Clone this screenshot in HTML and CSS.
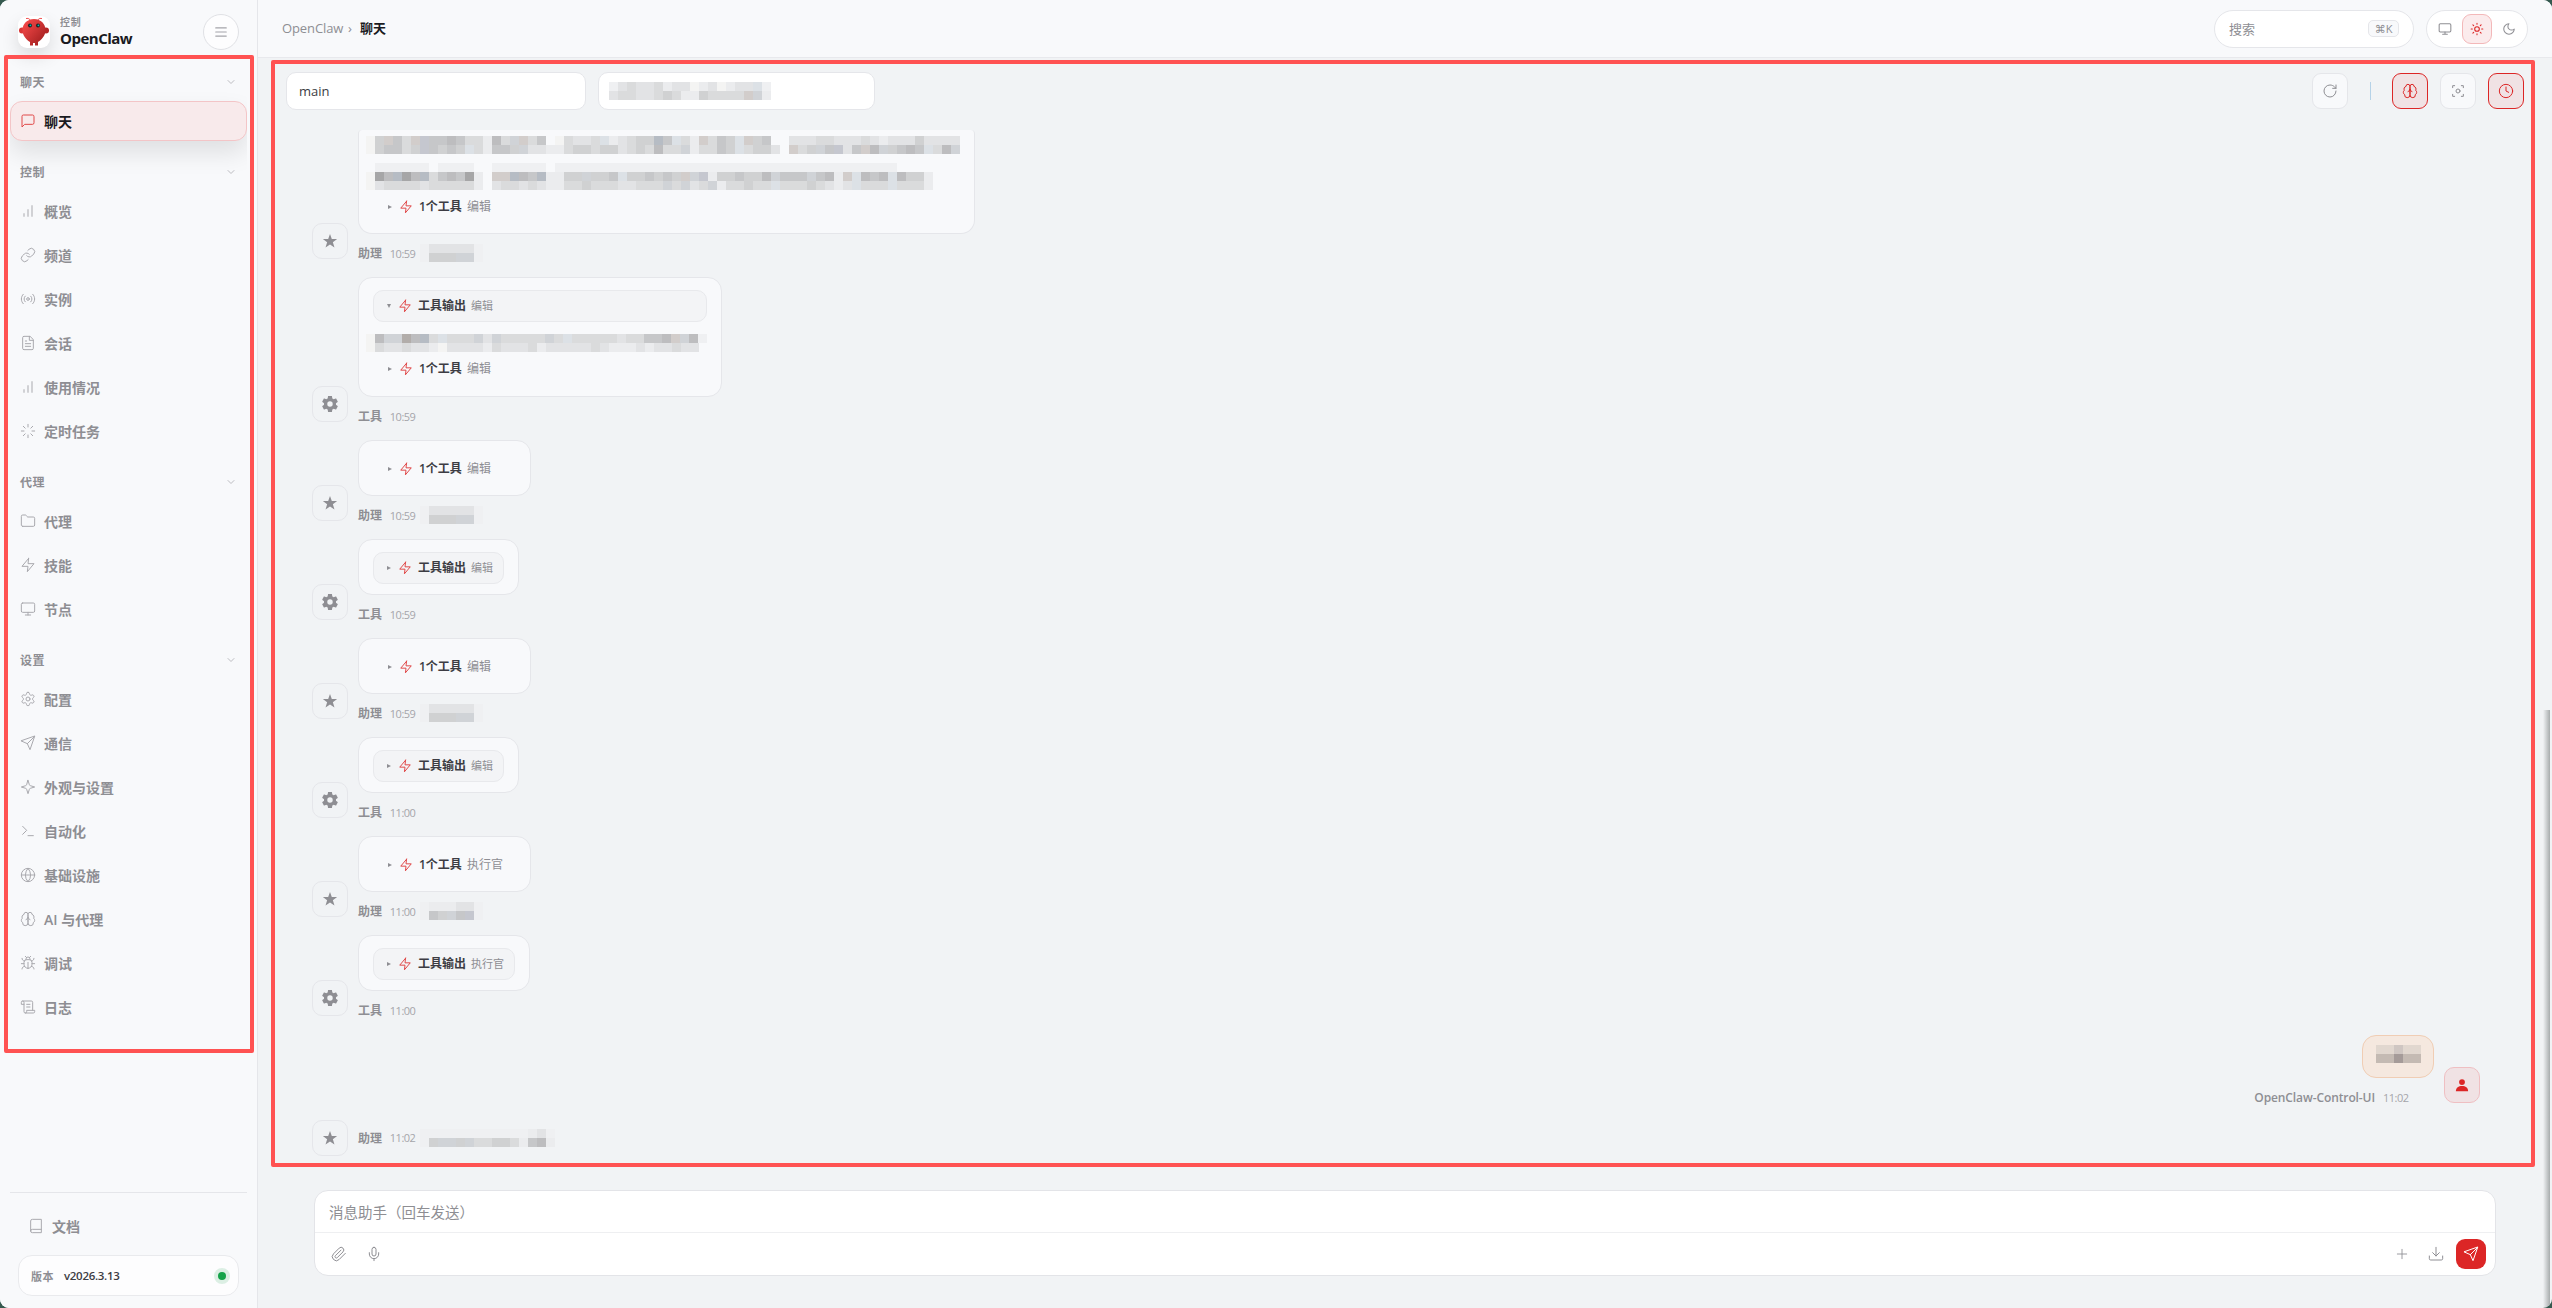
FILE: index.html
```html
<!DOCTYPE html>
<html lang="zh-CN">
<head>
  <meta charset="UTF-8">
  <meta name="viewport" content="width=device-width, initial-scale=1.0">
  <title>OpenClaw Control</title>
  <link rel="stylesheet" href="styles.css">
</head>
<body>
  <!-- Icons -->
  <svg class="sprite" xmlns="http://www.w3.org/2000/svg">
    <symbol id="i-chat" viewBox="0 0 24 24"><path d="M21 15a2 2 0 0 1-2 2H7l-4 4V5a2 2 0 0 1 2-2h14a2 2 0 0 1 2 2z"/></symbol>
    <symbol id="i-down" viewBox="0 0 24 24"><path d="m6 9 6 6 6-6"/></symbol>
    <symbol id="i-menu" viewBox="0 0 24 24"><path d="M3 5h18M3 12h18M3 19h18"/></symbol>
    <symbol id="i-bars" viewBox="0 0 24 24"><path d="M12 20V10M18 20V4M6 20v-4"/></symbol>
    <symbol id="i-link" viewBox="0 0 24 24"><path d="M10 13a5 5 0 0 0 7.54.54l3-3a5 5 0 0 0-7.07-7.07l-1.72 1.71"/><path d="M14 11a5 5 0 0 0-7.54-.54l-3 3a5 5 0 0 0 7.07 7.07l1.71-1.71"/></symbol>
    <symbol id="i-radio" viewBox="0 0 24 24"><path d="M4.9 19.1C1 15.2 1 8.8 4.9 4.9M7.8 16.2c-2.3-2.3-2.3-6.1 0-8.5M16.2 7.8c2.3 2.3 2.3 6.1 0 8.5M19.1 4.9C23 8.8 23 15.1 19.1 19"/><circle cx="12" cy="12" r="2"/></symbol>
    <symbol id="i-file" viewBox="0 0 24 24"><path d="M14.5 2H6a2 2 0 0 0-2 2v16a2 2 0 0 0 2 2h12a2 2 0 0 0 2-2V7.500z"/><path d="M14 2v6h6M16 13H8M16 17H8M10 9H8"/></symbol>
    <symbol id="i-loader" viewBox="0 0 24 24"><path d="M12 2v4M12 18v4M4.930 4.930l2.830 2.830M16.240 16.240l2.830 2.830M2 12h4M18 12h4M4.930 19.070l2.830-2.830M16.240 7.760l2.830-2.830"/></symbol>
    <symbol id="i-folder" viewBox="0 0 24 24"><path d="M4 20h16a2 2 0 0 0 2-2V8a2 2 0 0 0-2-2h-7.930a2 2 0 0 1-1.660-.9l-.82-1.200A2 2 0 0 0 7.930 3H4a2 2 0 0 0-2 2v13c0 1.100.9 2 2 2Z"/></symbol>
    <symbol id="i-zap" viewBox="0 0 24 24"><path d="M13 2 3 14h9l-1 8 10-12h-9l1-8z"/></symbol>
    <symbol id="i-monitor" viewBox="0 0 24 24"><rect x="2" y="3" width="20" height="14" rx="2"/><path d="M8 21h8M12 17v4"/></symbol>
    <symbol id="i-settings" viewBox="0 0 24 24"><path d="M12.220 2h-.44a2 2 0 0 0-2 2v.18a2 2 0 0 1-1 1.730l-.43.25a2 2 0 0 1-2 0l-.15-.08a2 2 0 0 0-2.730.73l-.22.38a2 2 0 0 0 .73 2.730l.15.1a2 2 0 0 1 1 1.720v.51a2 2 0 0 1-1 1.740l-.15.09a2 2 0 0 0-.73 2.730l.22.38a2 2 0 0 0 2.730.73l.15-.08a2 2 0 0 1 2 0l.43.25a2 2 0 0 1 1 1.730V20a2 2 0 0 0 2 2h.44a2 2 0 0 0 2-2v-.18a2 2 0 0 1 1-1.730l.43-.25a2 2 0 0 1 2 0l.15.08a2 2 0 0 0 2.730-.73l.22-.39a2 2 0 0 0-.73-2.730l-.15-.08a2 2 0 0 1-1-1.740v-.5a2 2 0 0 1 1-1.740l.15-.09a2 2 0 0 0 .73-2.730l-.22-.38a2 2 0 0 0-2.730-.73l-.15.08a2 2 0 0 1-2 0l-.43-.25a2 2 0 0 1-1-1.730V4a2 2 0 0 0-2-2z"/><circle cx="12" cy="12" r="3"/></symbol>
    <symbol id="i-send" viewBox="0 0 24 24"><path d="m22 2-7 20-4-9-9-4ZM22 2 11 13"/></symbol>
    <symbol id="i-spark" viewBox="0 0 24 24"><path d="M12 2l2 6.500a2.200 2.200 0 0 0 1.500 1.500L22 12l-6.500 2a2.200 2.200 0 0 0-1.500 1.500L12 22l-2-6.500A2.200 2.200 0 0 0 8.500 14L2 12l6.500-2A2.200 2.200 0 0 0 10 8.500z"/></symbol>
    <symbol id="i-terminal" viewBox="0 0 24 24"><path d="m4 17 6-6-6-6M12 19h8"/></symbol>
    <symbol id="i-globe" viewBox="0 0 24 24"><circle cx="12" cy="12" r="10"/><path d="M12 2a14.500 14.500 0 0 0 0 20 14.500 14.500 0 0 0 0-20M2 12h20"/></symbol>
    <symbol id="i-brain" viewBox="0 0 24 24"><path d="M12 5a3 3 0 1 0-5.997.125 4 4 0 0 0-2.526 5.770 4 4 0 0 0 .556 6.588A4 4 0 1 0 12 18Z"/><path d="M12 5a3 3 0 1 1 5.997.125 4 4 0 0 1 2.526 5.770 4 4 0 0 1-.556 6.588A4 4 0 1 1 12 18Z"/><path d="M15 13a4.500 4.500 0 0 1-3-4 4.500 4.500 0 0 1-3 4"/></symbol>
    <symbol id="i-bug" viewBox="0 0 24 24"><path d="m8 2 1.880 1.880M14.120 3.880 16 2M9 7.130v-1a3.003 3.003 0 1 1 6 0v1"/><path d="M12 20c-3.300 0-6-2.700-6-6v-3a4 4 0 0 1 4-4h4a4 4 0 0 1 4 4v3c0 3.300-2.700 6-6 6M12 20v-9"/><path d="M6.530 9C4.600 8.800 3 7.100 3 5M6 13H2M3 21c0-2.100 1.700-3.900 3.800-4M20.970 5c0 2.100-1.600 3.800-3.500 4M22 13h-4M17.200 17c2.100.1 3.800 1.900 3.800 4"/></symbol>
    <symbol id="i-scroll" viewBox="0 0 24 24"><path d="M8 21h12a2 2 0 0 0 2-2v-2H10v2a2 2 0 1 1-4 0V5a2 2 0 1 0-4 0v3h4"/><path d="M19 17V5a2 2 0 0 0-2-2H4M15 8h-5M15 12h-5"/></symbol>
    <symbol id="i-book" viewBox="0 0 24 24"><path d="M4 19.500v-15A2.500 2.500 0 0 1 6.500 2H20v20H6.500a2.500 2.500 0 0 1 0-5H20"/></symbol>
    <symbol id="i-sun" viewBox="0 0 24 24"><circle cx="12" cy="12" r="4"/><path d="M12 2v2M12 20v2M4.930 4.930l1.410 1.410M17.660 17.660l1.410 1.410M2 12h2M20 12h2M6.340 17.660l-1.410 1.410M19.070 4.930l-1.410 1.410"/></symbol>
    <symbol id="i-moon" viewBox="0 0 24 24"><path d="M12 3a6 6 0 0 0 9 9 9 9 0 1 1-9-9Z"/></symbol>
    <symbol id="i-refresh" viewBox="0 0 24 24"><path d="M21 12a9 9 0 1 1-9-9c2.520 0 4.930 1 6.740 2.740L21 8M21 3v5h-5"/></symbol>
    <symbol id="i-focus" viewBox="0 0 24 24"><path d="M4 7V4h3M17 4h3v3M20 17v3h-3M7 20H4v-3"/><circle cx="12" cy="12" r="3"/></symbol>
    <symbol id="i-clock" viewBox="0 0 24 24"><circle cx="12" cy="12" r="10"/><path d="M12 6v6l4 2"/></symbol>
    <symbol id="i-clip" viewBox="0 0 24 24"><path d="m21.440 11.050-9.190 9.190a6 6 0 0 1-8.490-8.490l8.570-8.570A4 4 0 1 1 18 8.840l-8.590 8.570a2 2 0 0 1-2.830-2.830l8.490-8.480"/></symbol>
    <symbol id="i-mic" viewBox="0 0 24 24"><path d="M12 2a3 3 0 0 0-3 3v7a3 3 0 0 0 6 0V5a3 3 0 0 0-3-3Z"/><path d="M19 10v2a7 7 0 0 1-14 0v-2M12 19v3"/></symbol>
    <symbol id="i-plus" viewBox="0 0 24 24"><path d="M4 12h16M12 4v16"/></symbol>
    <symbol id="i-download" viewBox="0 0 24 24"><path d="M22 15v4a2 2 0 0 1-2 2H4a2 2 0 0 1-2-2v-4M7 10l5 5 5-5M12 15V2"/></symbol>
    <symbol id="i-star" viewBox="0 0 24 24"><path d="M12 1.500l2.700 7.600h8l-6.400 4.900 2.400 7.900L12 17.200l-6.700 4.700L7.700 14 1.300 9.100h8z"/></symbol>
    <symbol id="i-gear" viewBox="2 2 20 20"><path d="M19.430 12.980c.04-.32.07-.64.07-.98s-.03-.66-.07-.98l2.110-1.650c.19-.15.24-.42.120-.64l-2-3.460c-.12-.22-.39-.3-.61-.22l-2.490 1c-.52-.4-1.080-.73-1.690-.98l-.38-2.650C14.460 2.180 14.250 2 14 2h-4c-.25 0-.46.18-.49.42l-.38 2.650c-.61.25-1.170.59-1.690.98l-2.490-1c-.23-.09-.49 0-.61.22l-2 3.460c-.13.22-.07.49.12.64l2.110 1.650c-.04.32-.07.65-.07.98s.03.66.07.98l-2.110 1.650c-.19.15-.24.42-.12.64l2 3.460c.12.22.39.3.61.22l2.490-1c.52.4 1.080.73 1.690.98l.38 2.650c.03.24.24.42.49.42h4c.25 0 .46-.18.49-.42l.38-2.650c.61-.25 1.170-.59 1.690-.98l2.490 1c.23.09.49 0 .61-.22l2-3.460c.12-.22.07-.49-.12-.64l-2.110-1.650zM12 15.400a3.400 3.400 0 1 1 0-6.800 3.400 3.400 0 0 1 0 6.800z"/></symbol>
    <symbol id="i-user" viewBox="0 0 24 24"><circle cx="12" cy="7" r="5"/><path d="M1.500 22.500c0-6 4.500-9 10.500-9s10.500 3 10.500 9z"/></symbol>
  </svg>

  <div class="app">
    <aside class="sidebar">
      <div class="brand">
        <span class="logo">
          <svg viewBox="0 0 32 32">
            <defs>
              <linearGradient id="shell" x1="0" y1="0" x2="1" y2="1">
                <stop offset="0" stop-color="#ff4d4d"/>
                <stop offset="1" stop-color="#991b1b"/>
              </linearGradient>
            </defs>
            <path d="M12.500 4Q10 1.500 8 2.500M19.500 4Q22 1.500 24 2.500" fill="none" stroke="#f05252" stroke-width="1"/>
            <circle cx="4" cy="14.500" r="3" fill="#d93636"/>
            <circle cx="28" cy="14.500" r="3" fill="#b52626"/>
            <path d="M16 3C9 3 4.500 8 4.500 14S9 24 12 26v3.500h3V27h2v2.500h3V26c3-2 7.500-6 7.500-12S23 3 16 3z" fill="url(#shell)"/>
            <circle cx="12" cy="9.500" r="2" fill="#1a2228"/>
            <circle cx="20" cy="9.500" r="2" fill="#1a2228"/>
            <circle cx="12.400" cy="9.300" r="0.900" fill="#00c5b0"/>
            <circle cx="20.400" cy="9.300" r="0.900" fill="#00c5b0"/>
          </svg>
        </span>
        <div class="brand-text">
          <span class="brand-sub">控制</span>
          <span class="brand-name">OpenClaw</span>
        </div>
        <button class="menu-btn"><svg class="icon"><use href="#i-menu"/></svg></button>
      </div>

      <nav class="nav">
        <div class="nav-label">聊天<svg class="icon"><use href="#i-down"/></svg></div>
        <a class="nav-item active"><svg class="icon"><use href="#i-chat"/></svg>聊天</a>

        <div class="nav-label">控制<svg class="icon"><use href="#i-down"/></svg></div>
        <a class="nav-item"><svg class="icon"><use href="#i-bars"/></svg>概览</a>
        <a class="nav-item"><svg class="icon"><use href="#i-link"/></svg>频道</a>
        <a class="nav-item"><svg class="icon"><use href="#i-radio"/></svg>实例</a>
        <a class="nav-item"><svg class="icon"><use href="#i-file"/></svg>会话</a>
        <a class="nav-item"><svg class="icon"><use href="#i-bars"/></svg>使用情况</a>
        <a class="nav-item"><svg class="icon"><use href="#i-loader"/></svg>定时任务</a>

        <div class="nav-label">代理<svg class="icon"><use href="#i-down"/></svg></div>
        <a class="nav-item"><svg class="icon"><use href="#i-folder"/></svg>代理</a>
        <a class="nav-item"><svg class="icon"><use href="#i-zap"/></svg>技能</a>
        <a class="nav-item"><svg class="icon"><use href="#i-monitor"/></svg>节点</a>

        <div class="nav-label">设置<svg class="icon"><use href="#i-down"/></svg></div>
        <a class="nav-item"><svg class="icon"><use href="#i-settings"/></svg>配置</a>
        <a class="nav-item"><svg class="icon"><use href="#i-send"/></svg>通信</a>
        <a class="nav-item"><svg class="icon"><use href="#i-spark"/></svg>外观与设置</a>
        <a class="nav-item"><svg class="icon"><use href="#i-terminal"/></svg>自动化</a>
        <a class="nav-item"><svg class="icon"><use href="#i-globe"/></svg>基础设施</a>
        <a class="nav-item"><svg class="icon"><use href="#i-brain"/></svg>AI 与代理</a>
        <a class="nav-item"><svg class="icon"><use href="#i-bug"/></svg>调试</a>
        <a class="nav-item"><svg class="icon"><use href="#i-scroll"/></svg>日志</a>
      </nav>

      <div class="sidebar-footer">
        <a class="docs"><svg class="icon"><use href="#i-book"/></svg>文档</a>
        <div class="version">
          <span class="version-label">版本</span>
          <span class="version-num">v2026.3.13</span>
          <span class="version-dot"></span>
        </div>
      </div>
    </aside>

    <main class="main">
      <header class="topbar">
        <div class="crumbs"><span>OpenClaw</span><span class="sep">›</span><b>聊天</b></div>
        <div class="search"><span>搜索</span><kbd>⌘K</kbd></div>
        <div class="theme">
          <span class="theme-btn"><svg class="icon"><use href="#i-monitor"/></svg></span>
          <span class="theme-btn on"><svg class="icon"><use href="#i-sun"/></svg></span>
          <span class="theme-btn"><svg class="icon"><use href="#i-moon"/></svg></span>
        </div>
      </header>

      <div class="controls">
        <div class="select select-agent">main</div>
        <div class="select select-session"><div class="mosaic" data-rows="ifeffegffhgfhgffEi feeffedeggdeeeewDg"></div></div>
        <div class="tools">
          <span class="tool"><svg class="icon"><use href="#i-refresh"/></svg></span>
          <span class="tool-sep"></span>
          <span class="tool on"><svg class="icon"><use href="#i-brain"/></svg></span>
          <span class="tool"><svg class="icon"><use href="#i-focus"/></svg></span>
          <span class="tool on"><svg class="icon"><use href="#i-clock"/></svg></span>
        </div>
      </div>

      <div class="stream">
        <div class="group">
          <span class="avatar"><svg class="icon solid"><use href="#i-star"/></svg></span>
          <div class="msg">
            <div class="bubble bubble-cut">
              <div class="mosaic" data-rows="hdwcewCccbceegbeDwec.heffeEgfeddBcEegwecdEwdc..fffeefffefgfffdffff hdccedCcdcdEegccdDffggeddeddfedebeeDgeecdEeddf.wedDcCfcwbDdcbcEebD . .iiiiii.iiii..iiiiii.iiiiiiiiiiiiiiiiiiiiiiiiiiiiiiiiiiiiii habBabBecbcag.wwBbcBggddDddcEddcdcdwDCgddcddbDcccDcbgwEbcbEbddg hfeeeefeeeeeg.feefefggeedeeeffeeeDeDfeDgeedeeEeeedefgfEeeeEeeeg"></div>
              <div class="summary"><i class="caret"></i><svg class="icon"><use href="#i-zap"/></svg><b>1个工具</b><span>编辑</span></div>
            </div>
            <div class="meta"><b>助理</b><time>10:59</time><div class="mosaic" data-rows="ifffffi idddDDi"></div></div>
          </div>
        </div>

        <div class="group">
          <span class="avatar"><svg class="icon solid"><use href="#i-gear"/></svg></span>
          <div class="msg">
            <div class="bubble bubble-open">
              <div class="card"><i class="caret open"></i><svg class="icon"><use href="#i-zap"/></svg><b>工具输出</b><span>编辑</span></div>
              <div class="mosaic" data-rows="hbDDWbBeEeeeDfDeeeeeDeEeeeeefeeccbwDbi heffeffghffffgefffegfffffefgggfgffeff"></div>
              <div class="summary"><i class="caret"></i><svg class="icon"><use href="#i-zap"/></svg><b>1个工具</b><span>编辑</span></div>
            </div>
            <div class="meta"><b>工具</b><time>10:59</time></div>
          </div>
        </div>

        <div class="group">
          <span class="avatar"><svg class="icon solid"><use href="#i-star"/></svg></span>
          <div class="msg">
            <div class="bubble bubble-call">
              <div class="summary"><i class="caret"></i><svg class="icon"><use href="#i-zap"/></svg><b>1个工具</b><span>编辑</span></div>
            </div>
            <div class="meta"><b>助理</b><time>10:59</time><div class="mosaic" data-rows="ifffffi idddDDi"></div></div>
          </div>
        </div>

        <div class="group">
          <span class="avatar"><svg class="icon solid"><use href="#i-gear"/></svg></span>
          <div class="msg">
            <div class="bubble">
              <div class="card"><i class="caret"></i><svg class="icon"><use href="#i-zap"/></svg><b>工具输出</b><span>编辑</span></div>
            </div>
            <div class="meta"><b>工具</b><time>10:59</time></div>
          </div>
        </div>

        <div class="group">
          <span class="avatar"><svg class="icon solid"><use href="#i-star"/></svg></span>
          <div class="msg">
            <div class="bubble bubble-call">
              <div class="summary"><i class="caret"></i><svg class="icon"><use href="#i-zap"/></svg><b>1个工具</b><span>编辑</span></div>
            </div>
            <div class="meta"><b>助理</b><time>10:59</time><div class="mosaic" data-rows="ifffffi idddDDi"></div></div>
          </div>
        </div>

        <div class="group">
          <span class="avatar"><svg class="icon solid"><use href="#i-gear"/></svg></span>
          <div class="msg">
            <div class="bubble">
              <div class="card"><i class="caret"></i><svg class="icon"><use href="#i-zap"/></svg><b>工具输出</b><span>编辑</span></div>
            </div>
            <div class="meta"><b>工具</b><time>11:00</time></div>
          </div>
        </div>

        <div class="group">
          <span class="avatar"><svg class="icon solid"><use href="#i-star"/></svg></span>
          <div class="msg">
            <div class="bubble bubble-call">
              <div class="summary"><i class="caret"></i><svg class="icon"><use href="#i-zap"/></svg><b>1个工具</b><span>执行官</span></div>
            </div>
            <div class="meta"><b>助理</b><time>11:00</time><div class="mosaic" data-rows="igggffi icdDcCi"></div></div>
          </div>
        </div>

        <div class="group">
          <span class="avatar"><svg class="icon solid"><use href="#i-gear"/></svg></span>
          <div class="msg">
            <div class="bubble">
              <div class="card"><i class="caret"></i><svg class="icon"><use href="#i-zap"/></svg><b>工具输出</b><span>执行官</span></div>
            </div>
            <div class="meta"><b>工具</b><time>11:00</time></div>
          </div>
        </div>

        <div class="group group-user">
          <div class="msg">
            <div class="bubble bubble-user"><div class="mosaic" data-rows="ppqpp rrsrr"></div></div>
            <div class="meta"><b>OpenClaw-Control-UI</b><time>11:02</time></div>
          </div>
          <span class="avatar avatar-user"><svg class="icon solid"><use href="#i-user"/></svg></span>
        </div>

        <div class="group group-last">
          <span class="avatar"><svg class="icon solid"><use href="#i-star"/></svg></span>
          <div class="meta"><b>助理</b><time>11:02</time><div class="mosaic" data-rows="iiiiiiiiiiiigfi idDDdDeeddegcbg"></div></div>
        </div>
      </div>

      <div class="composer">
        <div class="composer-input">消息助手（回车发送）</div>
        <div class="composer-bar">
          <svg class="icon"><use href="#i-clip"/></svg>
          <svg class="icon"><use href="#i-mic"/></svg>
          <svg class="icon push"><use href="#i-plus"/></svg>
          <svg class="icon"><use href="#i-download"/></svg>
          <button class="send"><svg class="icon"><use href="#i-send"/></svg></button>
        </div>
      </div>
    </main>

    <!-- Highlight frames -->
    <div class="frame frame-nav"></div>
    <div class="frame frame-chat"></div>
    <div class="edge"></div>
  </div>

  <script>
    const colors = {
      a: '#a6a6a7', b: '#bdbdbf', c: '#c6c7c9', d: '#d0d1d2', e: '#dadbdc', f: '#e2e3e5',
      g: '#ebecee', h: '#f4f4f3', i: '#eff0f2',
      B: '#b6bcc4', C: '#c5c7cf', D: '#d0d3d7', E: '#dce1e6',
      w: '#d2cdcb', W: '#b2adaa',
      p: '#e1d7cf', q: '#cfc6c2', r: '#c4bab3', s: '#a59b99'
    };

    // Each row is a string, one letter per cell
    document.querySelectorAll('.mosaic').forEach(el => {
      el.dataset.rows.split(' ').forEach(row => {
        const line = document.createElement('div');
        line.className = 'mosaic-row';
        [...row].forEach(c => {
          const cell = document.createElement('span');
          if (colors[c]) cell.style.backgroundColor = colors[c];
          line.appendChild(cell);
        });
        el.appendChild(line);
      });
    });
  </script>
</body>
</html>
```
FILE: styles.css
```css
* {
  box-sizing: border-box;
}
body {
  margin: 0;
  background: #35594f;
  font-family: "Open Sans", "Noto Sans CJK SC", sans-serif;
  font-size: 14px;
  color: #3c3c43;
}
.sprite {
  display: none;
}
.icon {
  width: 16px;
  height: 16px;
  flex: none;
  fill: none;
  stroke: currentColor;
  stroke-width: 1.5;
  stroke-linecap: round;
  stroke-linejoin: round;
}
.icon.solid {
  fill: currentColor;
  stroke: none;
}
.app {
  position: relative;
  display: flex;
  height: 1308px;
  background: #f1f3f5;
  border-radius: 9px;
  overflow: hidden;
}

/* Sidebar */
.sidebar {
  width: 258px;
  flex: none;
  display: flex;
  flex-direction: column;
  padding: 0 10px;
  background: #f8f9fb;
  border-right: 1px solid #e5e6ea;
}
.brand {
  display: flex;
  align-items: center;
  height: 64px;
  padding: 0 8px;
}
.logo {
  width: 32px;
  height: 32px;
  margin-right: 10px;
  border-radius: 9px;
  background: #fff;
  box-shadow: 0 8px 18px rgba(0, 0, 0, 0.12);
}
.logo svg {
  display: block;
  width: 32px;
  height: 32px;
}
.brand-text {
  display: flex;
  flex-direction: column;
  margin-top: -3px;
}
.brand-sub {
  font-size: 10px;
  line-height: 15px;
  font-weight: 600;
  letter-spacing: 0.8px;
  color: #8e8e93;
}
.brand-name {
  font-size: 15px;
  line-height: 17px;
  font-weight: 700;
  letter-spacing: -0.5px;
  color: #1a1a1e;
}
.menu-btn {
  display: flex;
  align-items: center;
  justify-content: center;
  width: 36px;
  height: 36px;
  margin-left: auto;
  padding: 0;
  border: 1px solid #e0e1e5;
  border-radius: 50%;
  background: #fdfdfe;
  color: #a4a4a9;
}
.menu-btn .icon {
  width: 14px;
  height: 14px;
  stroke-width: 2;
}
.nav {
  display: flex;
  flex-direction: column;
  gap: 4px;
  margin-top: -12px;
  padding-bottom: 20px;
  overflow: hidden;
}
.nav-label {
  display: flex;
  align-items: center;
  justify-content: space-between;
  height: 31px;
  margin-top: 11px;
  padding: 0 10px;
  font-size: 12px;
  font-weight: 600;
  letter-spacing: 0.5px;
  color: #8e8e93;
}
.nav-label:first-child {
  margin-top: 14px;
}
.nav-label .icon {
  width: 12px;
  height: 12px;
  stroke-width: 2;
  color: #bdbdc2;
}
.nav-item {
  display: flex;
  align-items: center;
  gap: 8px;
  height: 40px;
  flex: none;
  padding: 0 9px;
  border: 1px solid transparent;
  border-radius: 12px;
  font-weight: 600;
  color: #8e8e93;
}
.nav-item .icon {
  color: #a9a9ae;
}
.nav-item.active {
  color: #1a1a1e;
  background: #f8eaeb;
  border-color: #f3c5c7;
  box-shadow: 0 12px 24px rgba(0, 0, 0, 0.1);
}
.nav-item.active .icon {
  color: #e04848;
}
.sidebar-footer {
  margin-top: auto;
  padding: 13px 8px 12px;
  border-top: 1px solid #e5e6ea;
}
.docs {
  display: flex;
  align-items: center;
  gap: 8px;
  height: 40px;
  padding-left: 10px;
  font-weight: 600;
  color: #8e8e93;
}
.docs .icon {
  color: #a9a9ae;
}
.version {
  display: flex;
  align-items: center;
  height: 41px;
  margin: 9px 0 0;
  padding: 0 12px;
  border: 1px solid #e9eaed;
  border-radius: 14px;
  background: #fdfdfe;
  font-size: 12px;
}
.version-label {
  font-size: 11px;
  font-weight: 600;
  letter-spacing: 0.5px;
  color: #8e8e93;
}
.version-num {
  margin-left: 10px;
  font-size: 11.500px;
  font-weight: 600;
  letter-spacing: -0.3px;
}
.version-dot {
  width: 8px;
  height: 8px;
  margin-left: auto;
  border-radius: 50%;
  background: #16a34a;
  box-shadow: 0 0 0 4px #dcefe4;
}

/* Topbar */
.main {
  flex: 1;
  display: flex;
  flex-direction: column;
  min-width: 0;
}
.topbar {
  display: flex;
  align-items: center;
  height: 58px;
  flex: none;
  padding: 0 24px;
  background: #f8f9fb;
  border-bottom: 1px solid #e8e9ed;
}
.crumbs {
  display: flex;
  align-items: center;
  margin-top: -2px;
  font-size: 13px;
  color: #8e8e93;
}
.crumbs span:first-child {
  width: 58px;
  letter-spacing: -0.1px;
}
.crumbs .sep {
  width: 20px;
  text-align: center;
}
.crumbs b {
  color: #1a1a1e;
}
.search {
  display: flex;
  align-items: center;
  justify-content: space-between;
  width: 200px;
  height: 38px;
  margin-left: auto;
  padding: 0 14px;
  border: 1px solid #e5e6ea;
  border-radius: 19px;
  background: #fff;
  font-size: 13px;
  color: #8e8e93;
}
.search kbd {
  width: 31px;
  height: 17px;
  border: 1px solid #e5e6ea;
  border-radius: 5px;
  background: #f8f9fb;
  font: 11px/15px "Open Sans", "DejaVu Sans", sans-serif;
  text-align: center;
}
.theme {
  display: flex;
  align-items: center;
  gap: 2px;
  height: 38px;
  margin-left: 12px;
  padding: 0 3px;
  border: 1px solid #e5e6ea;
  border-radius: 19px;
  background: #fff;
}
.theme-btn {
  display: flex;
  align-items: center;
  justify-content: center;
  width: 30px;
  height: 30px;
  border-radius: 9px;
  color: #8e8e93;
}
.theme-btn .icon {
  width: 14px;
  height: 14px;
  stroke-width: 1.8;
}
.theme-btn.on {
  color: #dc2626;
  background: #fbebec;
  border: 1px solid #f3b8b9;
}

/* Chat controls */
.controls {
  display: flex;
  align-items: center;
  height: 38px;
  flex: none;
  margin: 14px 28px 0;
}
.select {
  display: flex;
  align-items: center;
  height: 38px;
  padding: 0 12px;
  border: 1px solid #e5e6ea;
  border-radius: 10px;
  background: #fff;
  font-size: 13px;
}
.select-agent {
  width: 300px;
}
.select-session {
  width: 277px;
  margin-left: 12px;
  padding: 0 10px;
}
.tools {
  display: flex;
  align-items: center;
  gap: 12px;
  margin-left: auto;
}
.tool {
  display: flex;
  align-items: center;
  justify-content: center;
  width: 36px;
  height: 36px;
  border: 1px solid #e5e6ea;
  border-radius: 9px;
  background: #f8f9fb;
  color: #8e8e93;
}
.tool.on {
  color: #dc2626;
  background: #f0e2e4;
  border-color: #dc2626;
}
.tool-sep {
  width: 1px;
  height: 18px;
  margin: 0 9px 0 10px;
  background: #b5d2e8;
}

/* Messages */
.stream {
  display: flex;
  flex-direction: column;
  gap: 14px;
  height: 1058px;
  flex: none;
  padding: 20px 72px 0 54px;
}
.group {
  display: flex;
  align-items: flex-end;
  gap: 10px;
}
.avatar {
  display: flex;
  align-items: center;
  justify-content: center;
  width: 36px;
  height: 36px;
  margin-bottom: 4px;
  border: 1px solid #e5e6ea;
  border-radius: 10px;
  color: #8e8e93;
}
.avatar-user {
  color: #dc2626;
  background: #f0e2e4;
  border-color: #efbfc2;
}
.avatar-user .icon {
  width: 14px;
  height: 14px;
}
.msg {
  display: flex;
  flex-direction: column;
  align-items: flex-start;
}
.bubble {
  height: 56px;
  padding: 12px 14px;
  border: 1px solid #e5e6ea;
  border-radius: 14px;
  background: #f8f9fb;
}
.bubble-call {
  width: 173px;
  padding-top: 18px;
}
.bubble-cut {
  width: 617px;
  height: 104px;
  padding-top: 6px;
  border-top: 0;
  border-radius: 4px 4px 14px 14px;
}
.bubble-open {
  width: 364px;
  height: 120px;
}
.bubble-cut .mosaic,
.bubble-open .mosaic {
  margin-left: -7px;
}
.bubble-open .mosaic {
  margin-top: 12px;
}
.bubble .mosaic + .summary {
  margin-top: 7px;
}
.summary,
.card {
  display: flex;
  align-items: center;
  height: 20px;
  font-size: 12px;
  line-height: 20px;
  white-space: nowrap;
}
.summary {
  padding-left: 15px;
}
.card {
  height: 32px;
  padding: 0 10px 0 13px;
  border: 1px solid #e8e9ec;
  border-radius: 10px;
  background: #f3f4f6;
}
.card span {
  margin-left: 5px;
  font-size: 11px;
}
.summary b,
.card b {
  margin-left: 6px;
  font-weight: 600;
}
.summary span {
  margin-left: 5px;
}
.summary span,
.card span {
  color: #8e8e93;
}
.summary .icon,
.card .icon {
  width: 14px;
  height: 14px;
  margin-left: 7px;
  stroke-width: 1.7;
  color: #e04848;
}
.caret {
  width: 4px;
  height: 4px;
  background: #8e8e93;
  clip-path: polygon(0 0, 100% 50%, 0 100%);
}
.caret.open {
  clip-path: polygon(0 0, 100% 0, 50% 100%);
}
.meta {
  display: flex;
  align-items: center;
  height: 20px;
  margin-top: 9px;
  font-size: 12px;
  color: #8e8e93;
}
.meta b {
  font-weight: 600;
  letter-spacing: -0.1px;
}
.meta time {
  width: 26px;
  margin-left: 8px;
  font-size: 11px;
  letter-spacing: -0.5px;
  color: #a5a5aa;
}
.meta .mosaic {
  margin-left: 4px;
}
.group-user {
  justify-content: flex-end;
  margin-top: 1px;
}
.group-user .msg {
  align-items: flex-end;
}
.group-user .meta {
  margin-right: 25px;
}
.bubble-user {
  height: 43px;
  padding: 9px 12px 0 13px;
  background: #f5e8df;
  border-color: #f0cdb4;
}
.group-last {
  align-items: center;
  margin-top: -1px;
}
.group-last .meta {
  margin-top: -5px;
}
.mosaic-row {
  display: flex;
  height: 9px;
}
.mosaic-row span {
  width: 9px;
  height: 9px;
}

/* Composer */
.composer {
  height: 86px;
  margin: 22px 56px 0 56px;
  border: 1px solid #e3e4e8;
  border-radius: 14px;
  background: #fff;
}
.composer-input {
  height: 42px;
  padding: 0 14px;
  border-bottom: 1px solid #eeeff1;
  font-size: 14.500px;
  line-height: 43px;
  color: #8e8e93;
}
.composer-bar {
  display: flex;
  align-items: center;
  height: 42px;
  padding: 0 9px 0 16px;
  color: #8e8e93;
}
.composer-bar .icon + .icon {
  margin-left: 19px;
}
.composer-bar .icon.push {
  width: 14px;
  height: 14px;
  margin-left: auto;
}
.send {
  display: flex;
  align-items: center;
  justify-content: center;
  width: 30px;
  height: 30px;
  margin-left: 12px;
  padding: 0;
  border: 0;
  border-radius: 9px;
  background: #dc2626;
  color: #fff;
}

/* Highlight frames over the page */
.frame {
  position: absolute;
  border: 4px solid #ff5252;
  border-radius: 2px;
}
.frame-nav {
  left: 4px;
  top: 55px;
  width: 250px;
  height: 998px;
}
.frame-chat {
  left: 271px;
  top: 60px;
  width: 2264px;
  height: 1107px;
}
.edge {
  position: absolute;
  right: 2px;
  bottom: 0;
  width: 7px;
  height: 598px;
  background: linear-gradient(90deg, rgba(120, 125, 125, 0), rgba(120, 125, 125, 0.6));
}
```
